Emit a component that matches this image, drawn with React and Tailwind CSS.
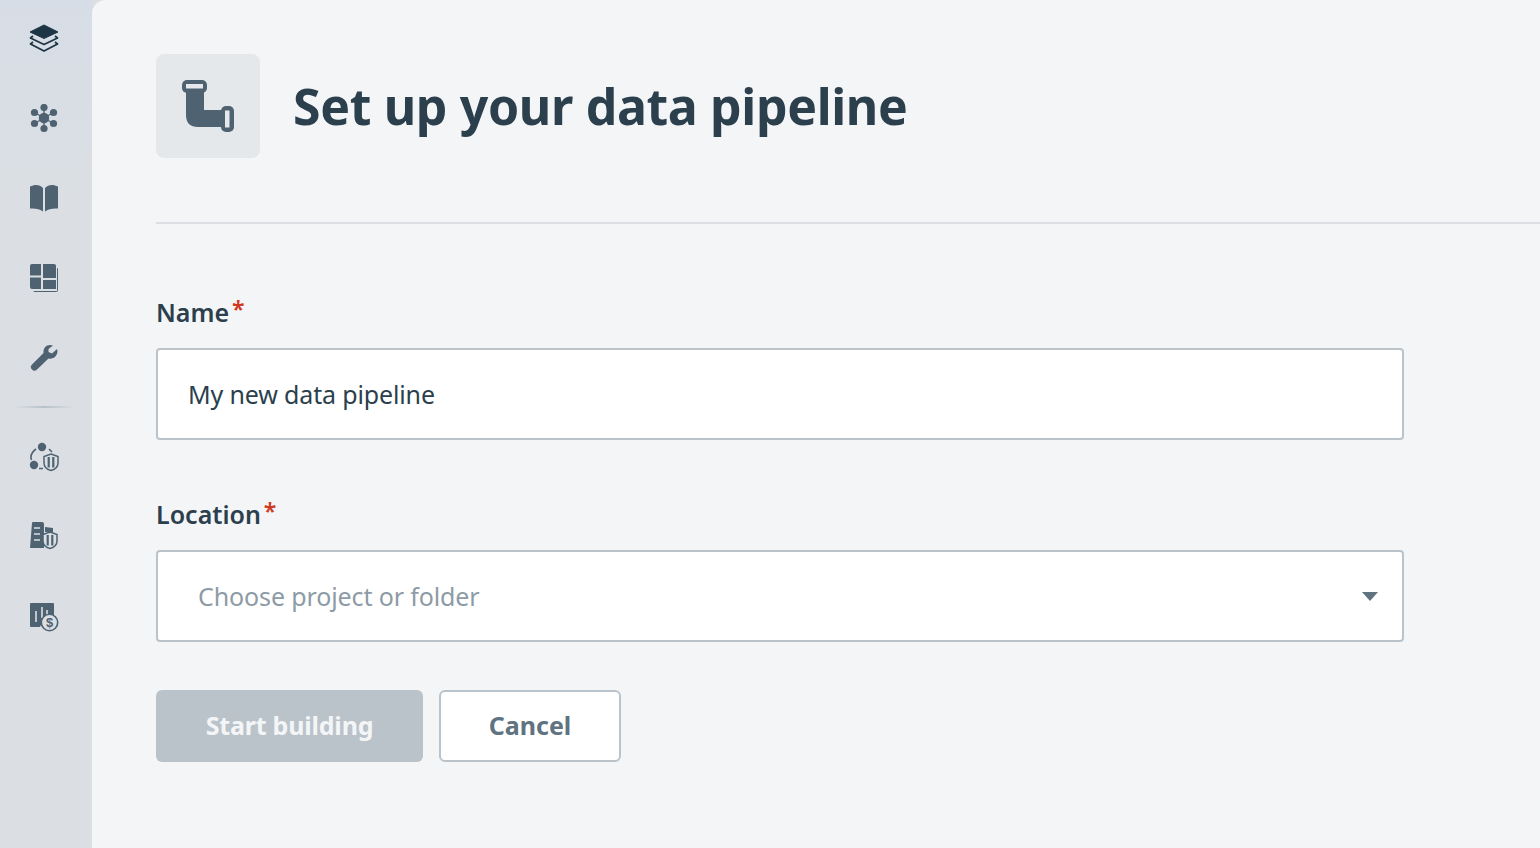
const Layers = () => (
  <svg width="30" height="30" viewBox="0 0 30 30">
    <path d="M15 1 L29 8 L15 14.5 L1 8 Z" fill="#1d3545" stroke="#1d3545" strokeLinejoin="round" />
    <path d="M4 12 L1.5 14 L15 20.5 L28.5 14 L26 12" fill="none" stroke="#1d3545" strokeWidth="1.8" strokeLinejoin="round" />
    <path d="M4 18 L1.5 20 L15 27 L28.5 20 L26 18" fill="none" stroke="#1d3545" strokeWidth="1.8" strokeLinejoin="round" />
  </svg>
);

const Hub = () => (
  <svg width="30" height="30" viewBox="0 0 30 30" fill="#4e6272">
    <path d="M15 4 V24 M6.5 9 L23.5 19 M23.5 9 L6.5 19" stroke="#4e6272" strokeWidth="1.4" />
    <circle cx="15" cy="14" r="5.2" />
    <circle cx="15" cy="3.5" r="3.6" />
    <circle cx="15" cy="24.5" r="3.6" />
    <circle cx="5.5" cy="8.5" r="3.6" />
    <circle cx="24.5" cy="8.5" r="3.6" />
    <circle cx="5.5" cy="19.5" r="3.6" />
    <circle cx="24.5" cy="19.5" r="3.6" />
  </svg>
);

const Book = () => (
  <svg width="30" height="30" viewBox="0 0 30 30" fill="#4e6272">
    <path d="M1 2.5 C6 0 11 0.5 14 4 V27.5 C11 25 6 24 1 24.5 Z" />
    <path d="M29 2.5 C24 0 19 0.5 16 4 V27.5 C19 25 24 24 29 24.5 Z" />
  </svg>
);

const Dashboard = () => (
  <svg width="30" height="30" viewBox="0 0 30 30" fill="#4e6272">
    <path d="M1 3 a2 2 0 0 1 2-2 H12 V12.5 H1 Z" />
    <path d="M14 1 H25 a2 2 0 0 1 2 2 V15 H14 Z" />
    <path d="M1 14.5 H12 V26 H3 a2 2 0 0 1-2-2 Z" />
    <path d="M14 17 H27 V26 H14 Z" />
    <path d="M28 5 L29 5.5 V27 a2 2 0 0 1-2 2 H5 L4.5 28 H28 Z" />
  </svg>
);

const Wrench = () => (
  <svg width="30" height="30" viewBox="0 0 30 30" fill="#4e6272">
    <path d="M21 2 C17 2 14 5.5 14.5 10 L3 21.5 a3.2 3.2 0 0 0 5 5 L19.5 15.5 C24.5 16.5 28.5 13 28.5 8 L28 6 L23 10.5 L19.5 9 L19.5 6 L24 2.5 Z" />
  </svg>
);

const Shield = ({ x, y }) => (
  <g transform={`translate(${x} ${y})`}>
    <path d="M7 0 L14 2.5 V9 C14 13 10.5 15.5 7 16.5 C3.5 15.5 0 13 0 9 V2.5 Z" fill="#dbdfe3" stroke="#4e6272" strokeWidth="1.5" />
    <path d="M4.7 3 V13.5 M9.3 3 V13.5" stroke="#4e6272" strokeWidth="2.2" />
  </g>
);

const Governance = () => (
  <svg width="30" height="30" viewBox="0 0 30 30" fill="#4e6272">
    <circle cx="13" cy="5" r="4.2" />
    <circle cx="5" cy="23" r="4.2" />
    <path d="M7 7 C3 10 1 14 2.5 18 M10 26.5 H14 M20 7 L23 10" fill="none" stroke="#4e6272" strokeWidth="1.6" />
    <Shield x={15} y={12} />
  </svg>
);

const Building = () => (
  <svg width="30" height="30" viewBox="0 0 30 30" fill="#4e6272">
    <path d="M3 1 a1 1 0 0 1 1-1 H13 a2 2 0 0 1 2 2 V26 H1 Z" />
    <path d="M5 6 H11 M5 12 H11 M5 18 H11" stroke="#dbdfe3" strokeWidth="1.6" />
    <path d="M16 5 L24 6 V10 H16 Z" />
    <Shield x={14} y={10} />
  </svg>
);

const Billing = () => (
  <svg width="30" height="30" viewBox="0 0 30 30" fill="#4e6272">
    <path d="M1 2 a1 1 0 0 1 1-1 H24 a1 1 0 0 1 1 1 V14 H16 L11 25 H2 a1 1 0 0 1-1-1 Z" />
    <path d="M7 9 V20 M13 5 V16 M18 8 V13" stroke="#dbdfe3" strokeWidth="1.6" />
    <circle cx="20.5" cy="20.5" r="8.2" fill="#dbdfe3" stroke="#4e6272" strokeWidth="1.6" />
    <text x="20.5" y="25" textAnchor="middle" fontSize="13" fontWeight="700" fontFamily="'Liberation Sans', sans-serif" fill="#4e6272">$</text>
  </svg>
);

const Pipe = () => (
  <svg width="56" height="56" viewBox="0 0 56 56" fill="#4e6272">
    <path d="M5 12 H23 V32 H42 V49 H17 C9 49 5 45 5 37 Z" />
    <rect x="1" y="2" width="25" height="13" rx="5" />
    <rect x="5" y="6" width="17" height="4.5" fill="#e6e8eb" />
    <rect x="40" y="28" width="13" height="26" rx="5" />
    <rect x="44" y="32.5" width="4.5" height="17" fill="#e6e8eb" />
  </svg>
);

const topIcons = [Layers, Hub, Book, Dashboard, Wrench];
const bottomIcons = [Governance, Building, Billing];

const labelClass = "flex items-start gap-[3px] text-[25px] leading-[34px] font-semibold text-[#2b3f4d]";
const starClass = "text-[23px] leading-[28px] text-[#d0391d]";

export default function App() {
  return (
    <div className="flex h-screen w-full overflow-hidden bg-[#dbdfe3] font-['Noto_Sans',sans-serif]">
      <aside className="flex w-[92px] shrink-0 flex-col items-center bg-gradient-to-b from-[#d7dde6] to-[#dbdfe3] to-[25%] pt-[24px] pr-[4px]">
        <div className="flex flex-col gap-[49.75px]">
          {topIcons.map((Icon, i) => <Icon key={i} />)}
        </div>
        <div className="mt-[33px] h-[2px] w-[62px] bg-gradient-to-r from-transparent via-[#b8c1c9] to-transparent" />
        <div className="mt-[34px] flex flex-col gap-[50px]">
          {bottomIcons.map((Icon, i) => <Icon key={i} />)}
        </div>
      </aside>
      <main className="flex-1 rounded-tl-[14px] bg-[#f4f5f7] pt-[54px] pl-[64px]">
        <div className="flex items-center gap-[33px] border-b-2 border-[#dbdfe3] pb-[64px]">
          <div className="flex h-[104px] w-[104px] items-center justify-center rounded-[8px] bg-[#e5e8eb] pl-[2px]">
            <Pipe />
          </div>
          <h1 className="text-[50px] font-bold tracking-[-0.35px] text-[#2b3f4d]">Set up your data pipeline</h1>
        </div>
        <form className="w-[1248px] pt-[71px]">
          <label className={labelClass}>Name<span className={starClass}>*</span></label>
          <input readOnly value="My new data pipeline" className="mt-[19px] block h-[92px] w-full rounded-[4px] border-2 border-[#bac3ca] bg-white px-[30px] text-[25px] tracking-[-0.15px] text-[#2b3f4d]" />
          <label className={`${labelClass} mt-[57px]`}>Location<span className={starClass}>*</span></label>
          <div className="mt-[19px] flex h-[92px] items-center justify-between rounded-[4px] border-2 border-[#bac3ca] bg-white pr-[24px] pl-[40px] text-[25px] tracking-[-0.12px] text-[#8d9ba6]">
            <span className="pt-[2px]">Choose project or folder</span>
            <span className="h-0 w-0 border-x-[8px] border-t-[9px] border-x-transparent border-t-[#5f7381]" />
          </div>
          <div className="mt-[48px] flex gap-[16px]">
            <button type="button" className="h-[72px] w-[267px] rounded-[6px] bg-[#bac3ca] text-[25px] font-bold tracking-[-0.2px] text-[#f4f5f7]">Start building</button>
            <button type="button" className="h-[72px] w-[182px] rounded-[6px] border-2 border-[#bac3ca] bg-white text-[25px] font-bold text-[#5f7381]">Cancel</button>
          </div>
        </form>
      </main>
    </div>
  );
}
